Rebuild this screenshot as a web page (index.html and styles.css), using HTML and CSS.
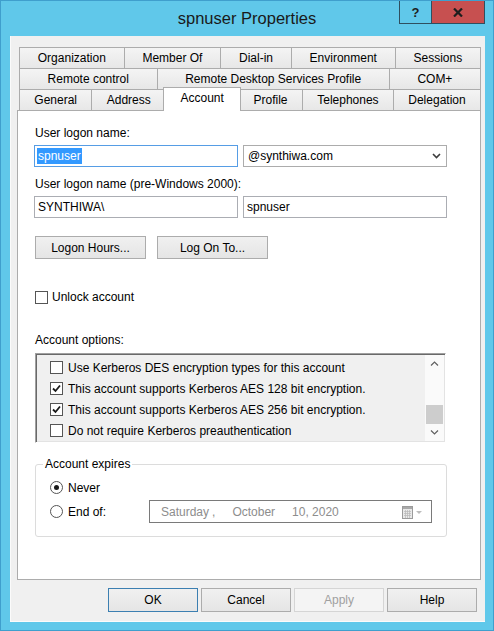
FILE: index.html
```html
<!DOCTYPE html>
<html lang="en">
<head>
  <meta charset="UTF-8">
  <title>spnuser Properties</title>
  <meta name="viewport" content="width=device-width, initial-scale=1.0">
  <link rel="stylesheet" href="styles.css">
</head>
<body>

  <div class="window">
    <div class="titlebar">
      <h1 class="caption">spnuser Properties</h1>
      <div class="caption-buttons">
        <button class="cap-btn cap-help" type="button">?</button>
        <button class="cap-btn cap-close" type="button" aria-label="Close">
          <svg width="10" height="9" viewBox="0 0 10 9"><path d="M1 0.5 L9 8.5 M9 0.5 L1 8.5" stroke="#1e1e1e" stroke-width="2.2"/></svg>
        </button>
      </div>
    </div>

    <div class="client">
      <div class="tabs">
        <div class="tab-row">
          <span class="tab">Organization</span>
          <span class="tab">Member Of</span>
          <span class="tab">Dial-in</span>
          <span class="tab">Environment</span>
          <span class="tab">Sessions</span>
        </div>
        <div class="tab-row">
          <span class="tab">Remote control</span>
          <span class="tab">Remote Desktop Services Profile</span>
          <span class="tab">COM+</span>
        </div>
        <div class="tab-row">
          <span class="tab">General</span>
          <span class="tab">Address</span>
          <span class="tab active">Account</span>
          <span class="tab">Profile</span>
          <span class="tab">Telephones</span>
          <span class="tab">Delegation</span>
        </div>
      </div>

      <div class="page">
        <div class="label">User logon name:</div>
        <div class="field-row">
          <div class="textbox focused"><span class="selected">spnuser</span></div>
          <div class="combo">
            <span>@synthiwa.com</span>
            <svg width="9" height="6" viewBox="0 0 9 6"><path d="M1 1 L4.5 4.5 L8 1" fill="none" stroke="#3c3c3c" stroke-width="1.6"/></svg>
          </div>
        </div>

        <div class="label label-gap">User logon name (pre-Windows 2000):</div>
        <div class="field-row">
          <div class="textbox">SYNTHIWA\</div>
          <div class="textbox">spnuser</div>
        </div>

        <div class="button-row">
          <button class="btn wide" type="button">Logon Hours...</button>
          <button class="btn wide" type="button">Log On To...</button>
        </div>

        <div class="check-row unlock"><span class="check"></span>Unlock account</div>

        <div class="label options-label">Account options:</div>
        <div class="listbox">
          <ul class="list-items">
            <li><span class="check"></span>Use Kerberos DES encryption types for this account</li>
            <li>
              <span class="check"><svg width="9" height="9" viewBox="0 0 9 9"><path d="M1 4.5 L3.5 7 L8 1.5" fill="none" stroke="#1a1a1a" stroke-width="1.8"/></svg></span>
              This account supports Kerberos AES 128 bit encryption.
            </li>
            <li>
              <span class="check"><svg width="9" height="9" viewBox="0 0 9 9"><path d="M1 4.5 L3.5 7 L8 1.5" fill="none" stroke="#1a1a1a" stroke-width="1.8"/></svg></span>
              This account supports Kerberos AES 256 bit encryption.
            </li>
            <li><span class="check"></span>Do not require Kerberos preauthentication</li>
          </ul>
          <div class="scrollbar">
            <div class="sb-arrow">
              <svg width="9" height="5" viewBox="0 0 9 5"><path d="M1 4.5 L4.5 1 L8 4.5" fill="none" stroke="#606060" stroke-width="1.2"/></svg>
            </div>
            <div class="sb-track"><div class="sb-thumb"></div></div>
            <div class="sb-arrow">
              <svg width="9" height="5" viewBox="0 0 9 5"><path d="M1 0.5 L4.5 4 L8 0.5" fill="none" stroke="#606060" stroke-width="1.2"/></svg>
            </div>
          </div>
        </div>

        <fieldset class="group">
          <legend>Account expires</legend>
          <div class="radio-row"><span class="radio on"></span>Never</div>
          <div class="radio-row end-row">
            <span class="radio"></span>End of:
            <div class="datepicker">
              <span class="dt-day">Saturday</span>
              <span class="dt-sep">,</span>
              <span class="dt-month">October</span>
              <span>10, 2020</span>
              <svg class="dt-icon" width="22" height="14" viewBox="0 0 22 14">
                <rect x="0.5" y="1.5" width="10" height="12" fill="#e9e9e9" stroke="#9b9b9b"/>
                <rect x="1" y="2" width="9" height="2" fill="#a9a9a9"/>
                <path d="M2 6.5h7 M2 8.5h7 M2 10.5h7 M3.5 5v8 M5.5 5v8 M7.5 5v8" stroke="#b8b8b8" stroke-width="0.7"/>
                <path d="M14 6 L20 6 L17 9 Z" fill="#bdbdbd"/>
              </svg>
            </div>
          </div>
        </fieldset>
      </div>

      <div class="dialog-buttons">
        <button class="btn default" type="button">OK</button>
        <button class="btn" type="button">Cancel</button>
        <button class="btn" type="button" disabled>Apply</button>
        <button class="btn" type="button">Help</button>
      </div>
    </div>
  </div>

</body>
</html>
```

FILE: styles.css
```css
* {
  box-sizing: border-box;
}
body {
  margin: 0;
  font-family: "Liberation Sans", Arial, sans-serif;
  font-size: 12px;
  color: #000;
}
button {
  font: inherit;
  color: inherit;
  margin: 0;
}

/* window frame */
.window {
  width: 494px;
  height: 631px;
  display: flex;
  flex-direction: column;
  background: #60c8ea;
  border: 1px solid #3f9fcd;
}
.titlebar {
  flex: none;
  height: 35px;
  display: grid;
  grid-template-columns: 1fr auto 1fr;
}
.caption {
  grid-column: 2;
  margin: 0;
  font-size: 16.5px;
  font-weight: normal;
  line-height: 35px;
  color: #1a1a1a;
}
.caption-buttons {
  grid-column: 3;
  justify-self: end;
  align-self: start;
  display: flex;
  margin-right: 8px;
}
.cap-btn {
  height: 23px;
  padding: 0;
  border: 1px solid #2f4f5f;
  border-top: 0;
  background: transparent;
  display: flex;
  align-items: center;
  justify-content: center;
}
.cap-help {
  width: 33px;
  font-size: 13px;
  font-weight: bold;
  color: #1e1e1e;
}
.cap-close {
  width: 53px;
  border-left: 0;
  background: #c75050;
}

.client {
  flex: 1;
  margin: 0 8px 8px 9px;
  padding: 11px 4px 0 7px;
  display: flex;
  flex-direction: column;
  background: #f0f0f0;
  box-shadow: inset 1px 0 0 #fbfbfb, inset 0 -1px 0 #fbfbfb;
}

/* tab strip, three rows */
.tab-row {
  display: flex;
  height: 21px;
  margin-left: 2px;
}
.tab {
  flex: 1 1 auto;
  height: 21px;
  padding: 0 6px;
  line-height: 20px;
  text-align: center;
  white-space: nowrap;
  border: 1px solid #acacac;
  border-bottom: 0;
  background: linear-gradient(#f4f4f4, #e7e7e7);
}
.tab + .tab {
  margin-left: -1px;
}
.tab.active {
  position: relative;
  z-index: 1;
  height: 24px;
  margin: -2px -2px -1px -3px;
  padding: 0 8px;
  background: #fff;
}

/* account page */
.page {
  flex: none;
  height: 470px;
  padding: 15px 0 0 17px;
  background: #fff;
  border: 1px solid #acacac;
}
.label {
  line-height: 15px;
}
.label-gap {
  margin-top: 10px;
}
.options-label {
  margin-top: 28px;
}
.field-row {
  display: grid;
  grid-template-columns: 204px 204px;
  column-gap: 5px;
  margin: 4px 0 0 -1px;
}
.textbox {
  height: 22px;
  padding: 0 3px;
  display: flex;
  align-items: center;
  white-space: nowrap;
  background: #fff;
  border: 1px solid #abadb3;
}
.textbox.focused {
  padding-left: 2px;
  border-color: #569de5;
}
.selected {
  padding: 0 1px;
  line-height: 16px;
  color: #fff;
  background: #3399ff;
}
.combo {
  height: 22px;
  padding: 0 5px 0 4px;
  display: flex;
  align-items: center;
  justify-content: space-between;
  background: #fff;
  border: 1px solid #acacac;
}

.btn {
  height: 23px;
  padding: 0;
  border: 1px solid #acacac;
  background: linear-gradient(#f0f0f0, #e5e5e5);
}
.btn.wide {
  width: 111px;
}
.btn.default {
  border-color: #3c7fb1;
}
.btn:disabled {
  color: #a0a0a0;
  border-color: #d5d5d5;
  background: #f4f4f4;
}
.button-row {
  display: flex;
  gap: 11px;
  margin-top: 18px;
}

.check-row {
  display: flex;
  align-items: center;
  line-height: 15px;
}
.unlock {
  margin-top: 31px;
}
.check {
  flex: none;
  width: 13px;
  height: 13px;
  margin-right: 4px;
  display: inline-flex;
  align-items: center;
  justify-content: center;
  background: #fff;
  border: 1px solid #555;
}

/* checked list with its scroll bar */
.listbox {
  display: flex;
  width: 411px;
  height: 90px;
  margin-top: 5px;
  padding: 1px;
  background: #f0f0f0;
  border: 1px solid;
  border-color: #a0a0a0 #fff #fff #a0a0a0;
  box-shadow: inset 1px 1px 0 #696969, inset -1px -1px 0 #e3e3e3;
}
.list-items {
  flex: 1;
  margin: 0;
  padding: 2px 0 0 13px;
  list-style: none;
}
.list-items li {
  height: 21px;
  display: flex;
  align-items: center;
  white-space: nowrap;
}
.list-items .check {
  margin-right: 5px;
}
.scrollbar {
  width: 19px;
  display: flex;
  flex-direction: column;
  background: #fafafa;
}
.sb-arrow {
  height: 17px;
  display: flex;
  align-items: center;
  justify-content: center;
}
.sb-track {
  flex: 1;
  display: flex;
  flex-direction: column;
  justify-content: flex-end;
}
.sb-thumb {
  height: 19px;
  margin: 0 1px;
  background: #cdcdcd;
}

/* expiry group */
.group {
  width: 412px;
  min-width: 0;
  margin: 14px 0 0;
  padding: 8px 14px 13px;
  border: 1px solid #dcdcdc;
  border-radius: 3px;
}
.group legend {
  margin-left: -7px;
  padding: 0 2px;
  line-height: 15px;
}
.radio-row {
  height: 15px;
  display: flex;
  align-items: center;
}
.end-row {
  height: 23px;
  margin-top: 5px;
}
.radio {
  flex: none;
  width: 13px;
  height: 13px;
  margin-right: 5px;
  display: inline-flex;
  align-items: center;
  justify-content: center;
  border: 1px solid #555;
  border-radius: 50%;
  background: #fff;
}
.radio.on::after {
  content: "";
  width: 5px;
  height: 5px;
  border-radius: 50%;
  background: #1a1a1a;
}
.datepicker {
  width: 283px;
  height: 23px;
  margin-left: auto;
  padding: 0 7px 0 11px;
  display: flex;
  align-items: center;
  color: #8d8d8d;
  background: #fff;
  border: 1px solid #7a7a7a;
}
.dt-day {
  margin-right: 3px;
}
.dt-sep,
.dt-month {
  margin-right: 17px;
}
.dt-icon {
  margin-left: auto;
}

.dialog-buttons {
  display: flex;
  justify-content: flex-end;
  gap: 3px;
  margin: 8px 4px 0 0;
}
.dialog-buttons .btn {
  width: 90px;
  height: 24px;
}
```
